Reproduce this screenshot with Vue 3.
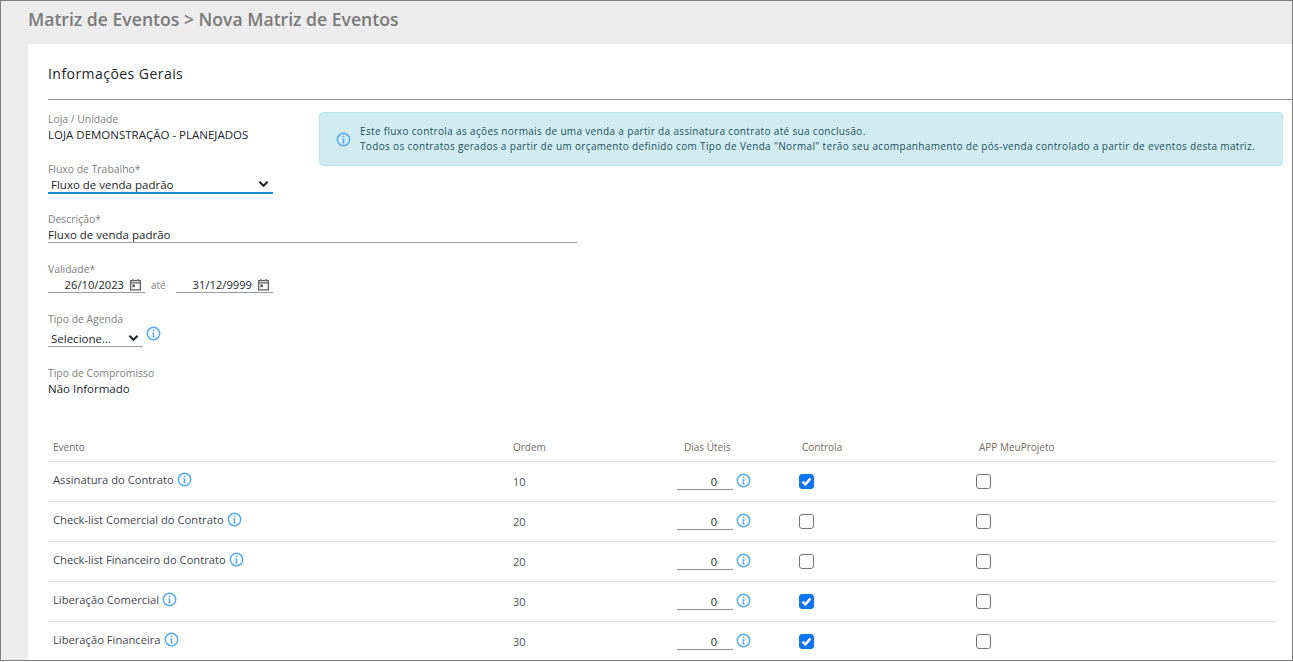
<script setup>
const eventos = [
  { nome: 'Assinatura do Contrato', ordem: 10, controla: true },
  { nome: 'Check-list Comercial do Contrato', ordem: 20, controla: false },
  { nome: 'Check-list Financeiro do Contrato', ordem: 20, controla: false },
  { nome: 'Liberação Comercial', ordem: 30, controla: true },
  { nome: 'Liberação Financeira', ordem: 30, controla: true },
]
</script>

<template>
  <div class="frame">
    <header class="page_title">Matriz de Eventos &gt; Nova Matriz de Eventos</header>
    <main class="card">
      <h2 class="card_title">Informações Gerais</h2>

      <section class="top_row">
        <div class="top_fields">
          <div class="field">
            <span class="label">Loja / Unidade</span>
            <span class="value">LOJA DEMONSTRAÇÃO - PLANEJADOS</span>
          </div>
          <div class="field">
            <span class="label">Fluxo de Trabalho*</span>
            <div class="select select_focus">
              <span>Fluxo de venda padrão</span>
              <svg class="chevron" viewBox="0 0 12 8"><path d="M1.5 1.5 6 6l4.5-4.5" /></svg>
            </div>
          </div>
        </div>
        <div class="alert">
          <svg class="info alert_icon" viewBox="0 0 16 16">
            <circle cx="8" cy="8" r="6.6" />
            <path d="M8 7.2v4.2M6.9 11.4h2.2M6.9 7.2H8" />
            <circle class="dot" cx="8" cy="4.7" r="1" />
          </svg>
          <p>
            Este fluxo controla as ações normais de uma venda a partir da assinatura contrato até sua conclusão.<br />
            Todos os contratos gerados a partir de um orçamento definido com Tipo de Venda "Normal" terão seu acompanhamento de pós-venda controlado a partir de eventos desta matriz.
          </p>
        </div>
      </section>

      <div class="field">
        <span class="label">Descrição*</span>
        <div class="text_input">Fluxo de venda padrão</div>
      </div>

      <div class="field">
        <span class="label">Validade*</span>
        <div class="date_row">
          <div class="date_input">
            <span>26/10/2023</span>
            <svg class="calendar" viewBox="0 0 12 12">
              <path d="M1.5 2.5h9v8.5h-9zM1.5 4.5h9M3.5 1v2M8.5 1v2" />
              <rect x="3" y="6" width="2.5" height="2.5" />
            </svg>
          </div>
          <span class="ate">até</span>
          <div class="date_input">
            <span>31/12/9999</span>
            <svg class="calendar" viewBox="0 0 12 12">
              <path d="M1.5 2.5h9v8.5h-9zM1.5 4.5h9M3.5 1v2M8.5 1v2" />
              <rect x="3" y="6" width="2.5" height="2.5" />
            </svg>
          </div>
        </div>
      </div>

      <div class="field field_agenda">
        <span class="label">Tipo de Agenda</span>
        <div class="agenda_row">
          <div class="select select_small">
            <span>Selecione...</span>
            <svg class="chevron" viewBox="0 0 12 8"><path d="M1.5 1.5 6 6l4.5-4.5" /></svg>
          </div>
          <svg class="info" viewBox="0 0 16 16">
            <circle cx="8" cy="8" r="6.6" />
            <path d="M8 7.2v4.2M6.9 11.4h2.2M6.9 7.2H8" />
            <circle class="dot" cx="8" cy="4.7" r="1" />
          </svg>
        </div>
      </div>

      <div class="field">
        <span class="label">Tipo de Compromisso</span>
        <span class="value">Não Informado</span>
      </div>

      <section class="events">
        <div class="events_row events_head">
          <div>Evento</div>
          <div>Ordem</div>
          <div class="head_dias">Dias Úteis</div>
          <div>Controla</div>
          <div>APP MeuProjeto</div>
        </div>
        <div v-for="evento in eventos" :key="evento.nome" class="events_row">
          <div class="event_name">
            <span>{{ evento.nome }}</span>
            <svg class="info" viewBox="0 0 16 16">
              <circle cx="8" cy="8" r="6.6" />
              <path d="M8 7.2v4.2M6.9 11.4h2.2M6.9 7.2H8" />
              <circle class="dot" cx="8" cy="4.7" r="1" />
            </svg>
          </div>
          <div class="event_order">{{ evento.ordem }}</div>
          <div class="event_days">
            <div class="days_input">0</div>
            <svg class="info" viewBox="0 0 16 16">
              <circle cx="8" cy="8" r="6.6" />
              <path d="M8 7.2v4.2M6.9 11.4h2.2M6.9 7.2H8" />
              <circle class="dot" cx="8" cy="4.7" r="1" />
            </svg>
          </div>
          <div class="check_cell">
            <span class="check" :class="{ check_on: evento.controla }">
              <svg v-if="evento.controla" viewBox="0 0 16 16"><path d="M3.2 8.3 6.6 11.6 12.8 4.5" /></svg>
            </span>
          </div>
          <div class="check_cell">
            <span class="check"></span>
          </div>
        </div>
      </section>
    </main>
  </div>
</template>

<style>
html, body {
  margin: 0;
  background: #ffffff;
}
</style>

<style scoped>
.frame {
  box-sizing: border-box;
  width: 1293px;
  height: 661px;
  border: 1px solid #7f7f7f;
  background: #ececec;
  overflow: hidden;
  font-family: "Open Sans", sans-serif;
  color: #212529;
}

.page_title {
  height: 43px;
  padding-left: 27px;
  line-height: 36px;
  font-size: 17.6px;
  font-weight: 600;
  color: #7a7a7a;
}

.card {
  margin-left: 27px;
  height: 617px;
  padding-left: 20px;
  background: #ffffff;
  overflow: hidden;
}

.card_title {
  margin: 0;
  height: 56px;
  box-sizing: border-box;
  border-bottom: 1px solid #8f8f8f;
  line-height: 60px;
  font-size: 14px;
  font-weight: 500;
  letter-spacing: 0.45px;
  color: #212529;
}

.top_row {
  display: flex;
  gap: 46px;
  margin-top: 12px;
}

.top_fields {
  width: 225px;
  flex: none;
}

.field {
  height: 50px;
  display: flex;
  flex-direction: column;
  align-items: flex-start;
}

.field_agenda {
  height: 54px;
}

.label {
  height: 14px;
  line-height: 15px;
  font-size: 10.4px;
  color: #808080;
}

.value {
  line-height: 17px;
  font-size: 11.5px;
  font-weight: 500;
  color: #212529;
}

.select {
  box-sizing: border-box;
  width: 225px;
  height: 18px;
  padding: 0 3px;
  display: flex;
  align-items: center;
  justify-content: space-between;
  border-bottom: 1px solid #9a9a9a;
  font-size: 11.5px;
  font-weight: 500;
}

.select_focus {
  border-bottom: 2px solid #1a8ad8;
}

.select_small {
  width: 95px;
  height: 17px;
}

.chevron {
  width: 11px;
  height: 8px;
  margin-right: 1px;
  fill: none;
  stroke: #212529;
  stroke-width: 2.2;
}

.alert {
  box-sizing: border-box;
  width: 964px;
  height: 54px;
  padding: 0 16px;
  display: flex;
  align-items: center;
  gap: 9px;
  background: #d1ecf1;
  border: 1px solid #bee5eb;
  border-radius: 4px;
  color: #1b4f5c;
}

.alert p {
  margin: 0;
  font-size: 10px;
  line-height: 15px;
  font-weight: 500;
  letter-spacing: 0.34px;
  white-space: nowrap;
}

.alert_icon {
  flex: none;
}

.text_input {
  box-sizing: border-box;
  width: 529px;
  height: 17px;
  line-height: 17px;
  border-bottom: 1px solid #9a9a9a;
  font-size: 11.5px;
  font-weight: 500;
}

.date_row {
  display: flex;
  align-items: center;
}

.date_input {
  box-sizing: border-box;
  width: 97px;
  height: 17px;
  padding-right: 3px;
  display: flex;
  align-items: center;
  justify-content: flex-end;
  gap: 5px;
  border-bottom: 1px solid #9a9a9a;
  font-size: 11.2px;
  font-weight: 500;
}

.calendar {
  width: 13px;
  height: 13px;
  fill: none;
  stroke: #5f5f5f;
  stroke-width: 1.2;
}

.calendar rect {
  fill: #5f5f5f;
  stroke: none;
}

.ate {
  box-sizing: border-box;
  width: 31px;
  padding-left: 6px;
  font-size: 10px;
  color: #808080;
}

.agenda_row {
  display: flex;
  align-items: flex-start;
  gap: 3px;
  margin-top: 4px;
}

.agenda_row .info {
  margin-top: -4px;
}

.info {
  width: 15px;
  height: 15px;
  flex: none;
  fill: none;
  stroke: #5aaaf0;
  stroke-width: 1.6;
}

.info .dot {
  fill: #5aaaf0;
  stroke: none;
}

.events {
  margin-top: 19px;
  width: 1228px;
}

.events_row {
  display: grid;
  grid-template-columns: 460px 164px 125px 177px 1fr;
  height: 40px;
  align-items: center;
  border-bottom: 1px solid #e2e2e2;
  box-sizing: border-box;
  font-size: 11.2px;
  font-weight: 500;
  color: #3f474e;
}

.events_head {
  height: 27px;
  padding-bottom: 2px;
  font-size: 10px;
  font-weight: 500;
  color: #6f6a64;
}

.events_head > div:nth-child(1),
.events_head > div:nth-child(2),
.events_head > div:nth-child(4),
.events_head > div:nth-child(5),
.event_name,
.event_order {
  padding-left: 5px;
}

.head_dias {
  padding-left: 12px;
}

.event_name {
  display: flex;
  align-items: center;
  gap: 3px;
  margin-top: -4px;
}

.event_order {
  color: #495057;
  font-size: 11px;
}

.event_days {
  display: flex;
  align-items: flex-start;
  gap: 3px;
  padding-left: 5px;
}

.days_input {
  box-sizing: border-box;
  width: 56px;
  height: 17px;
  margin-top: 0;
  padding-right: 16px;
  border-bottom: 1px solid #8f8f8f;
  text-align: right;
  line-height: 17px;
  font-size: 11px;
  color: #212529;
}

.check_cell {
  padding-left: 2px;
  display: flex;
}

.check {
  box-sizing: border-box;
  width: 15px;
  height: 15px;
  border: 1.5px solid #757575;
  border-radius: 3px;
  background: #ffffff;
  display: block;
}

.check_on {
  background: #0b76f0;
  border-color: #0b76f0;
}

.check svg {
  display: block;
  width: 100%;
  height: 100%;
  fill: none;
  stroke: #ffffff;
  stroke-width: 3;
}
</style>
